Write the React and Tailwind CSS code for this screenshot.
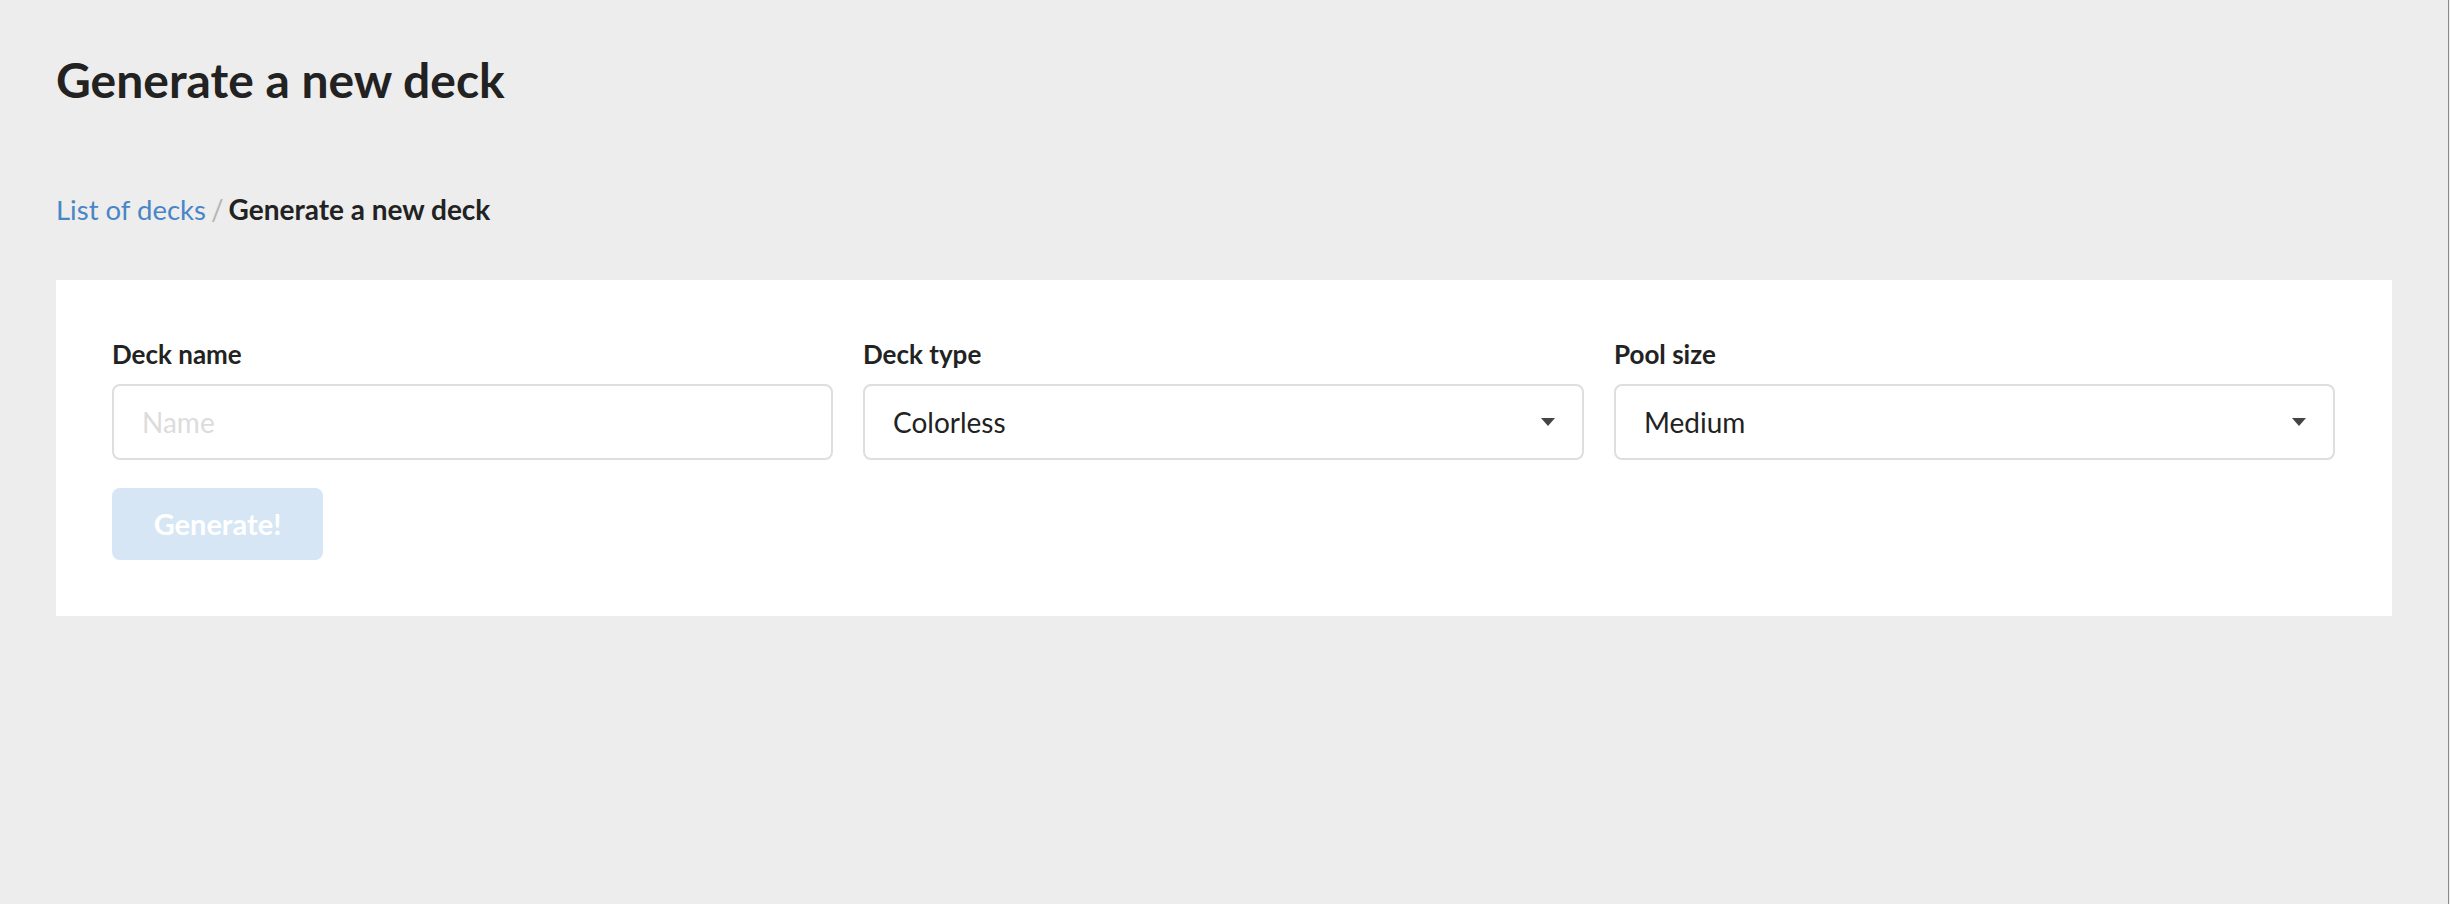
import { useState } from 'react';

const deckTypes = ['Colorless', 'White', 'Blue', 'Black', 'Red', 'Green'];
const poolSizes = ['Small', 'Medium', 'Large'];

function Caret() {
  return (
    <svg className="pointer-events-none absolute right-[29px] top-1/2 -translate-y-1/2" width="14" height="8" viewBox="0 0 14 8">
      <path d="M0 0 H14 L7 8 Z" fill="#444" />
    </svg>
  );
}

function Field({ label, children }) {
  return (
    <div className="flex flex-col">
      <label className="text-[26px] leading-[37px] font-bold text-[#222] mb-[11px]">{label}</label>
      {children}
    </div>
  );
}

export default function App() {
  const [name, setName] = useState('');
  const [deckType, setDeckType] = useState('Colorless');
  const [poolSize, setPoolSize] = useState('Medium');

  return (
    <div className="min-h-screen h-[904px] bg-[#ededed] flex" style={{ fontFamily: 'Lato, "Noto Sans", sans-serif' }}>
      <div className="flex-1 pl-[56px] pr-[56px] pt-[51px]">
        <h1 className="text-[48px] leading-[58px] font-bold text-[#222]">Generate a new deck</h1>

        <div className="mt-[79px] h-[42px] text-[28px] leading-[42px] text-[#222]">
          <a href="#" className="text-[#4a85c6] text-[27.5px]">List of decks</a>
          <span className="text-[#b5b5b5] mx-[5px]">/</span>
          <span className="font-bold">Generate a new deck</span>
        </div>

        <div className="mt-[50px] bg-white p-[56px] pr-[57px]">
          <div className="grid grid-cols-3 gap-[30px]">
            <Field label="Deck name">
              <input
                value={name}
                onChange={e => setName(e.target.value)}
                placeholder="Name"
                className="h-[76px] border-2 border-[#dedede] rounded-[8px] px-[28px] text-[28px] text-[#222] placeholder:text-[#dcdcdc] outline-none bg-white"
              />
            </Field>
            <Field label="Deck type">
              <div className="relative">
                <select value={deckType} onChange={e => setDeckType(e.target.value)}
                  className="w-full h-[76px] appearance-none border-2 border-[#dedede] rounded-[8px] px-[28px] text-[28px] text-[#222] outline-none bg-white">
                  {deckTypes.map(t => <option key={t} value={t}>{t}</option>)}
                </select>
                <Caret />
              </div>
            </Field>
            <Field label="Pool size">
              <div className="relative">
                <select value={poolSize} onChange={e => setPoolSize(e.target.value)}
                  className="w-full h-[76px] appearance-none border-2 border-[#dedede] rounded-[8px] px-[28px] text-[28px] text-[#222] outline-none bg-white">
                  {poolSizes.map(t => <option key={t} value={t}>{t}</option>)}
                </select>
                <Caret />
              </div>
            </Field>
          </div>
          <button disabled={!name}
            className="mt-[28px] h-[72px] w-[211px] rounded-[8px] bg-[#d6e6f5] text-white text-[29px] font-bold">
            Generate!
          </button>
        </div>
      </div>
      <div className="w-[2px] border-l border-[#8a8a8a] bg-[#ededed]" />
    </div>
  );
}
